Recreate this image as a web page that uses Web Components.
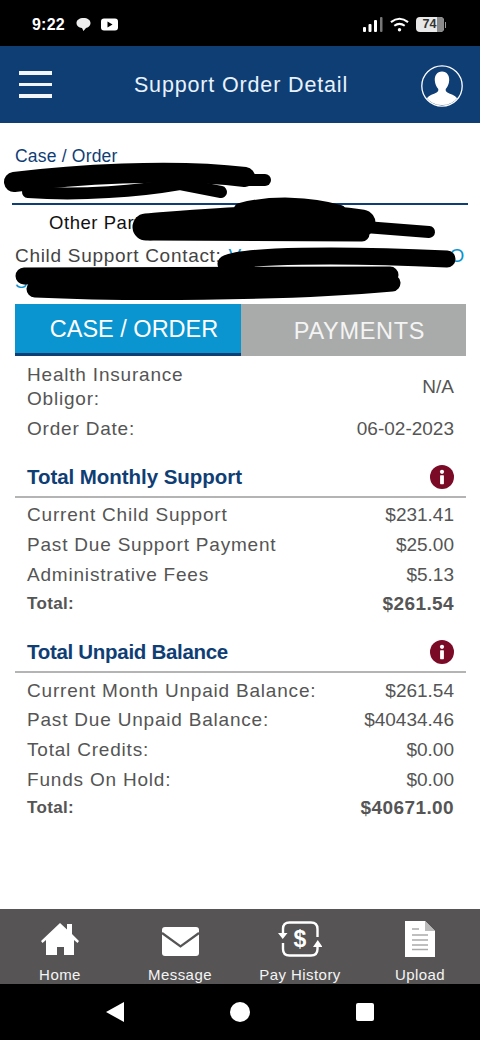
<!DOCTYPE html>
<html lang="en">
<head>
<meta charset="utf-8">
<title>Support Order Detail</title>
<style>
  html, body { margin: 0; height: 100%; background: #fff; }
  body { font-family: "Liberation Sans", Arial, sans-serif; }
  #app { display: flex; flex-direction: column; width: 480px; height: 1040px; overflow: hidden; }
</style>
</head>
<body>
<div id="app">
  <status-bar></status-bar>
  <app-header>Support Order Detail</app-header>
  <case-summary></case-summary>
  <tab-bar></tab-bar>
  <detail-list>
    <detail-row style="--row-h:55px">Health Insurance<br>Obligor:<span slot="value">N/A</span></detail-row>
    <detail-row style="--row-h:30px">Order Date:<span slot="value">06-02-2023</span></detail-row>
  </detail-list>
  <detail-section heading="Total Monthly Support" style="--gap-top:16px;--row-h:30px">
    <detail-row>Current Child Support<span slot="value">$231.41</span></detail-row>
    <detail-row>Past Due Support Payment<span slot="value">$25.00</span></detail-row>
    <detail-row>Administrative Fees<span slot="value">$5.13</span></detail-row>
    <detail-row total>Total:<span slot="value">$261.54</span></detail-row>
  </detail-section>
  <detail-section heading="Total Unpaid Balance" style="--gap-top:18px;--rule-gap:3px;--head-spacing:-.3px">
    <detail-row>Current Month Unpaid Balance:<span slot="value">$261.54</span></detail-row>
    <detail-row>Past Due Unpaid Balance:<span slot="value">$40434.46</span></detail-row>
    <detail-row>Total Credits:<span slot="value">$0.00</span></detail-row>
    <detail-row>Funds On Hold:<span slot="value">$0.00</span></detail-row>
    <detail-row total>Total:<span slot="value">$40671.00</span></detail-row>
  </detail-section>
  <bottom-nav>
    <nav-item label="Home">
      <svg viewBox="0 0 40 40" width="40" height="40" fill="#fff"><path d="M1 22 20 4l7 6.500V5h5v10l7 7-1.500 2L34 21v15H24v-8h-7v8H6V21l-3.500 3z"/></svg>
    </nav-item>
    <nav-item label="Message">
      <svg viewBox="0 0 40 40" width="40" height="40"><rect x="2" y="8" width="37" height="29" rx="3" fill="#fff"/><path d="M2 14 20.500 27.500 39 14" fill="none" stroke="#565455" stroke-width="2.200"/></svg>
    </nav-item>
    <nav-item label="Pay History">
      <svg viewBox="0 0 44 40" width="44" height="40" fill="none" stroke="#fff" stroke-width="2.400"><path d="M5 15V10q0-6.500 6.500-6.500H33q6.500 0 6.500 6.500V18M39.500 28v2q0 6.500-6.500 6.500H11.500Q5 36.500 5 30v-6"/><path d="M0 14h9.500l-4.750 6zM35 28h9.500l-4.750-7z" fill="#fff" stroke="none"/><text x="22" y="28" text-anchor="middle" font-family="Liberation Sans, Arial, sans-serif" font-size="23" font-weight="700" fill="#fff" stroke="none">$</text></svg>
    </nav-item>
    <nav-item label="Upload">
      <svg viewBox="0 0 40 40" width="40" height="40"><path d="M5 2h20l10 10v26H5z" fill="#fff"/><path d="M25 2v10h10z" fill="#bbb"/><path d="M12 10h7M12 16h16M12 21h16M12 26h16M12 30.500h16" stroke="#aaa" stroke-width="1.500"/></svg>
    </nav-item>
  </bottom-nav>
  <system-nav></system-nav>
</div>

<script>
class StatusBar extends HTMLElement {
  constructor() {
    super();
    this.attachShadow({ mode: "open" });
  }

  connectedCallback() {
    this.shadowRoot.innerHTML = `
    <style>
    :host{
      display:flex;
      align-items:center;
      height:46px;
      padding:3px 34px 0 32px;
      box-sizing:border-box;
      background:#000;
      color:#fff;
      flex:none;
    }
    .time{ font-size:16px; font-weight:700; margin-right:1px; letter-spacing:.2px; }
    .left{ display:flex; align-items:center; gap:10px; flex:1; }
    .right{ display:flex; align-items:center; gap:7px; }
    .batt{
      position:relative;
      width:28px;
      height:15px;
      border-radius:4px;
      background:#e8e8e8;
      color:#333;
      font-size:12.500px;
      font-weight:700;
      line-height:15px;
      text-align:center;
      overflow:hidden;
    }
    .batt span{ position:relative; z-index:1; }
    .batt::after{ content:""; position:absolute; right:0; top:0; bottom:0; width:7px; background:#8a8a8a; }
    .batt-wrap{ display:flex; align-items:center; gap:1px; }
    .nub{ width:1.500px; height:6px; background:#999; }
    </style>
    <div class="left">
      <span class="time">9:22</span>
      <svg width="15" height="15" viewBox="0 0 15 15" fill="#eee"><path d="M7.500 1C11.500 1 14.500 3 14.500 6S12 10.500 10 11L7.500 14 6 11C3 10.500.5 9 .5 6S3.500 1 7.500 1z"/></svg>
      <svg width="17" height="13" viewBox="0 0 17 13"><rect width="17" height="12" y=".5" rx="3" fill="#fff"/><path d="M6.500 3.500v6l5-3z" fill="#000"/></svg>
    </div>
    <div class="right">
      <svg width="20" height="15" viewBox="0 0 20 15"><rect x="0" y="10" width="3" height="5" rx="1" fill="#fff"/><rect x="5.500" y="7" width="3" height="8" rx="1" fill="#fff"/><rect x="11" y="3" width="3" height="12" rx="1" fill="#fff"/><rect x="17" y="0" width="2.500" height="15" rx="1" fill="#777"/></svg>
      <svg width="19" height="15" viewBox="0 0 20 15" fill="none" stroke="#fff" stroke-width="2.200"><path d="M1 5q9-7 18 0M4.500 8.800q5.500-4 11 0"/><circle cx="10" cy="13" r="1.800" fill="#fff" stroke="none"/></svg>
      <div class="batt-wrap"><div class="batt"><span>74</span></div><div class="nub"></div></div>
    </div>
  `;
  }
}

class AppHeader extends HTMLElement {
  constructor() {
    super();
    this.attachShadow({ mode: "open" });
  }

  connectedCallback() {
    this.shadowRoot.innerHTML = `
    <style>
    :host{
      display:grid;
      grid-template-columns:1fr auto 1fr;
      align-items:center;
      height:77px;
      padding:2px 17px 0 19px;
      box-sizing:border-box;
      background:#0f3e75;
      color:#e9f2fb;
      flex:none;
    }
    .menu{ display:flex; flex-direction:column; gap:8px; width:33px; margin-top:-2px; }
    .menu i{ display:block; height:3.500px; background:#f2f6fa; }
    .title{ font-size:21.500px; letter-spacing:.85px; }
    svg{ display:block; justify-self:end; }
    </style>
    <div class="menu"><i></i><i></i><i></i></div>
    <div class="title"><slot></slot></div>
    <svg width="42" height="42" viewBox="0 0 42 42">
      <circle cx="21" cy="21" r="20.200" fill="#0f3e75" stroke="#fff" stroke-width="1.300"/>
      <path d="M21 6.500c5 0 7.500 4 7.200 9-.2 3.500-1.700 6.500-3.300 8.300-.7 1 0 3 1.500 3.800 3 1.600 7.500 2.800 9.800 5.600A19 19 0 0 1 21 40a19 19 0 0 1-15.200-6.800c2.300-2.800 6.800-4 9.800-5.600 1.500-.8 2.200-2.800 1.500-3.800-1.600-1.800-3.100-4.800-3.300-8.300-.3-5 2.200-9 7.200-9z" fill="#fff"/>
    </svg>
  `;
  }
}

class CaseSummary extends HTMLElement {
  constructor() {
    super();
    this.attachShadow({ mode: "open" });
  }

  connectedCallback() {
    this.shadowRoot.innerHTML = `
    <style>
    :host{
      display:block;
      position:relative;
      height:181px;
      padding-top:22px;
      box-sizing:border-box;
      font-size:18.500px;
      letter-spacing:.55px;
      line-height:22px;
      flex:none;
    }
    .case{ padding:0 15px; height:58px; color:#0f3e75; font-size:17.500px; letter-spacing:.2px; }
    .rule{ height:2px; margin:0 12px 0 12px; background:#0f3e75; }
    .party{ padding:7px 0 0 49px; height:24px; color:#111; }
    .contact{ display:flex; padding:9px 15px 0; color:#444; white-space:nowrap; font-size:19px; letter-spacing:.7px; }
    .link{ display:flex; justify-content:space-between; flex:1; margin-left:7px; color:#0a94d0; }
    .more{ padding:4px 15px 0; color:#0a94d0; }
    svg{ position:absolute; left:0; top:0; }
    </style>
    <div class="case">Case / Order</div>
    <div class="rule"></div>
    <div class="party">Other Party</div>
    <div class="contact">Child Support Contact:<span class="link"><span>V</span><span>O</span></span></div>
    <div class="more">S</div>
    <svg width="480" height="181" viewBox="0 122 480 181" fill="none" stroke="#000" stroke-linecap="round" stroke-linejoin="round">
      <path d="M14 181C70 174 170 167 245 176" stroke-width="20"/>
      <path d="M245 179H265" stroke-width="12"/>
      <path d="M28 191C80 195 140 190 180 183L221 191" stroke-width="12"/>
      <path d="M146 226C200 222 300 212 362 222" stroke-width="27"/>
      <path d="M240 208C270 200 310 201 340 210" stroke-width="12"/>
      <path d="M150 232 362 233" stroke-width="15"/>
      <path d="M365 226 429 231" stroke-width="12"/>
      <path d="M226 263C240 254 340 253 447 258" stroke-width="17"/>
      <path d="M24 275 390 274" stroke-width="17"/>
      <path d="M35 288C120 292 280 292 392 282" stroke-width="17"/>
    </svg>
  `;
  }
}

class TabBar extends HTMLElement {
  constructor() {
    super();
    this.attachShadow({ mode: "open" });
  }

  connectedCallback() {
    this.shadowRoot.innerHTML = `
    <style>
    :host{
      display:grid;
      grid-template-columns:226px 225px;
      height:52px;
      margin:0 14px 0 15px;
      font-size:23.500px;
      color:#fff;
      flex:none;
    }
    div{ display:flex; align-items:center; justify-content:center; box-sizing:border-box; padding:1px 0 0 12px; }
    .active{ background:#0a94d0; border-bottom:3px solid #0f3e75; }
    .idle{ background:#a9abaa; color:#f4f4f4; letter-spacing:.7px; padding-top:2px; }
    </style>
    <div class="active">CASE / ORDER</div>
    <div class="idle">PAYMENTS</div>
  `;
  }
}

class DetailList extends HTMLElement {
  constructor() {
    super();
    this.attachShadow({ mode: "open" });
  }

  connectedCallback() {
    this.shadowRoot.innerHTML = `
    <style>
    :host{ display:block; padding-top:3px; flex:none; }
    </style>
    <slot></slot>
  `;
  }
}

class DetailRow extends HTMLElement {
  constructor() {
    super();
    this.attachShadow({ mode: "open" });
  }

  connectedCallback() {
    this.shadowRoot.innerHTML = `
    <style>
    :host{
      display:flex;
      align-items:center;
      justify-content:space-between;
      min-height:var(--row-h, 29.600px);
      padding:0 26px 0 27px;
      box-sizing:border-box;
      font-size:19px;
      line-height:24px;
      letter-spacing:.8px;
      color:#555;
    }
    .value{ letter-spacing:0; }
    :host([total]){
      font-size:17px;
      font-weight:700;
      letter-spacing:.35px;
      min-height:27px;
    }
    :host([total]) .value{ font-size:19px; letter-spacing:.4px; }
    </style>
    <div><slot></slot></div>
    <div class="value"><slot name="value"></slot></div>
  `;
  }
}

class DetailSection extends HTMLElement {
  constructor() {
    super();
    this.attachShadow({ mode: "open" });
  }

  connectedCallback() {
    this.shadowRoot.innerHTML = `
    <style>
    :host{ display:block; margin-top:var(--gap-top, 20px); flex:none; }
    .head{
      display:flex;
      align-items:center;
      justify-content:space-between;
      height:34px;
      padding:0 26px 2px 27px;
      font-size:20.500px;
      font-weight:700;
      letter-spacing:var(--head-spacing, -.05px);
      color:#0f3e75;
    }
    .rule{ height:2px; margin:0 14px var(--rule-gap, 2px) 15px; background:#b4b4b4; }
    svg{ display:block; }
    </style>
    <div class="head">
      <span>${this.getAttribute("heading")}</span>
      <svg width="24" height="24" viewBox="0 0 24 24">
        <circle cx="12" cy="12" r="12" fill="#7a0a26"/>
        <circle cx="12" cy="6.800" r="2.100" fill="#fff"/>
        <rect x="10.100" y="10.200" width="3.800" height="9" rx=".6" fill="#fff"/>
      </svg>
    </div>
    <div class="rule"></div>
    <slot></slot>
  `;
  }
}

class BottomNav extends HTMLElement {
  constructor() {
    super();
    this.attachShadow({ mode: "open" });
  }

  connectedCallback() {
    this.shadowRoot.innerHTML = `
    <style>
    :host{
      display:grid;
      grid-template-columns:repeat(4, 1fr);
      height:75px;
      margin-top:auto;
      background:#565455;
      flex:none;
    }
    </style>
    <slot></slot>
  `;
  }
}

class NavItem extends HTMLElement {
  constructor() {
    super();
    this.attachShadow({ mode: "open" });
  }

  connectedCallback() {
    this.shadowRoot.innerHTML = `
    <style>
    :host{
      display:flex;
      flex-direction:column;
      align-items:center;
      padding-top:10px;
      color:#f4f4f4;
      font-size:15px;
      letter-spacing:.45px;
    }
    .icon{ height:40px; margin-bottom:7px; }
    ::slotted(svg){ display:block; }
    </style>
    <div class="icon"><slot></slot></div>
    <span>${this.getAttribute("label")}</span>
  `;
  }
}

class SystemNav extends HTMLElement {
  constructor() {
    super();
    this.attachShadow({ mode: "open" });
  }

  connectedCallback() {
    this.shadowRoot.innerHTML = `
    <style>
    :host{
      display:grid;
      grid-template-columns:106px 18px 106px 20px 106px 18px 1fr;
      align-items:center;
      height:56px;
      box-sizing:border-box;
      background:#000;
      flex:none;
    }
    i{ display:block; background:#fff; }
    .back{ grid-column:2; width:18px; height:20px; justify-self:end; clip-path:polygon(100% 0,100% 100%,0 50%); }
    .home{ grid-column:4; width:20px; height:20px; border-radius:50%; }
    .recent{ grid-column:6; width:18px; height:18px; border-radius:2px; }
    </style>
    <i class="back"></i>
    <i class="home"></i>
    <i class="recent"></i>
  `;
  }
}

customElements.define("status-bar", StatusBar);
customElements.define("app-header", AppHeader);
customElements.define("case-summary", CaseSummary);
customElements.define("tab-bar", TabBar);
customElements.define("detail-list", DetailList);
customElements.define("detail-row", DetailRow);
customElements.define("detail-section", DetailSection);
customElements.define("bottom-nav", BottomNav);
customElements.define("nav-item", NavItem);
customElements.define("system-nav", SystemNav);
</script>
</body>
</html>
